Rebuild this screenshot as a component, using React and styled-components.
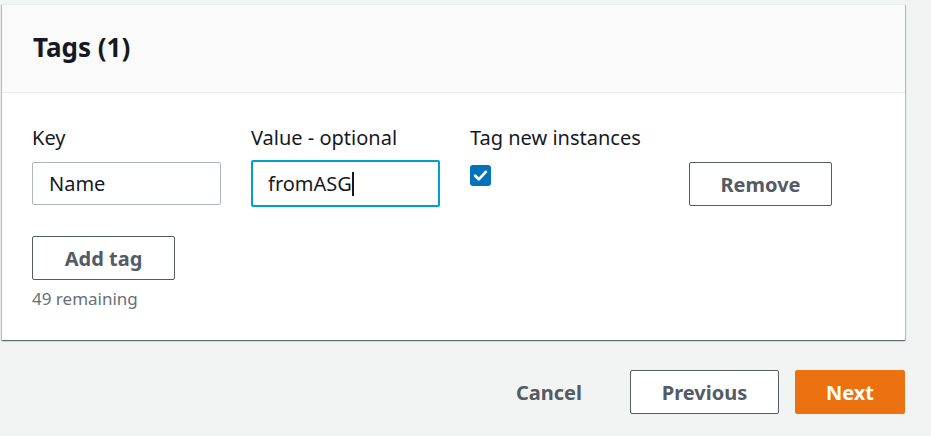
import React from "react";
import styled, { createGlobalStyle } from "styled-components";

const Global = createGlobalStyle`
  html, body { margin: 0; padding: 0; background: #f2f3f3; }
  body { font-family: "Noto Sans", "Open Sans", sans-serif; color: #16191f; }
  * { box-sizing: border-box; }
`;

const Page = styled.div`
  width: 931px;
  height: 436px;
  padding: 4px 26px 0 2px;
  background: #f2f3f3;
  overflow: hidden;
`;

const Card = styled.section`
  background: #fff;
  box-shadow: 0 1px 1px 0 rgba(0, 28, 36, 0.4), 1px 1px 1px 0 rgba(0, 28, 36, 0.2),
    -1px 1px 1px 0 rgba(0, 28, 36, 0.2);
  border-top: 1px solid #eaeded;
`;

const Header = styled.header`
  height: 88px;
  background: #fafafa;
  border-bottom: 1px solid #eaeded;
  display: flex;
  align-items: center;
  padding: 0 31px;
`;

const Title = styled.h2`
  margin: 0 0 4px;
  font-size: 26px;
  line-height: 32px;
  font-weight: 700;
  color: #16191f;
`;

const Body = styled.div`
  padding: 32px 30px 30px;
`;

const Row = styled.div`
  display: grid;
  grid-template-columns: 189px 189px 189px 143px;
  column-gap: 30px;
  align-items: start;
`;

const Field = styled.div`
  display: flex;
  flex-direction: column;
  gap: ${(p) => p.$gap || 11}px;
`;

const Label = styled.label`
  font-size: 20px;
  line-height: 26px;
  color: #16191f;
  white-space: nowrap;
`;

const Input = styled.div`
  height: ${(p) => (p.$focus ? 47 : 43)}px;
  margin-top: ${(p) => (p.$focus ? -2 : 0)}px;
  border: ${(p) => (p.$focus ? "2px solid #00a1c9" : "1px solid #aab7b8")};
  border-radius: 2px;
  padding: 0 ${(p) => (p.$focus ? 15 : 16)}px;
  display: flex;
  align-items: center;
  font-size: 20px;
  color: #16191f;
  background: #fff;
`;

const Caret = styled.span`
  display: inline-block;
  width: 2px;
  height: 24px;
  background: #16191f;
`;

const Check = styled.span`
  width: 21px;
  height: 21px;
  border-radius: 3px;
  background: #0073bb;
  display: flex;
  align-items: center;
  justify-content: center;
`;

const Button = styled.button`
  height: 44px;
  width: ${(p) => p.$w}px;
  border: 1px solid ${(p) => (p.$primary ? "#ec7211" : "#545b64")};
  border-radius: 2px;
  background: ${(p) => (p.$primary ? "#ec7211" : "#fff")};
  color: ${(p) => (p.$primary ? "#fff" : "#545b64")};
  font-family: "Noto Sans", "Open Sans", sans-serif;
  font-size: 20px;
  font-weight: 700;
  padding: 0;
  margin-top: ${(p) => p.$mt || 0}px;
`;

const LinkButton = styled.button`
  border: none;
  background: none;
  color: #545b64;
  font-family: "Noto Sans", "Open Sans", sans-serif;
  font-size: 20px;
  font-weight: 700;
  padding: 0 32px;
  height: 44px;
`;

const AddArea = styled.div`
  margin-top: 29px;
  display: flex;
  flex-direction: column;
  gap: 8px;
`;

const Hint = styled.div`
  font-size: 17px;
  line-height: 22px;
  color: #687078;
`;

const Footer = styled.div`
  display: flex;
  justify-content: flex-end;
  align-items: center;
  gap: 16px;
  margin-top: 30px;
`;

export default function App() {
  return (
    <Page>
      <Global />
      <Card>
        <Header>
          <Title>Tags (1)</Title>
        </Header>
        <Body>
          <Row>
            <Field>
              <Label>Key</Label>
              <Input>Name</Input>
            </Field>
            <Field>
              <Label>Value - optional</Label>
              <Input $focus>
                fromASG
                <Caret />
              </Input>
            </Field>
            <Field $gap={14}>
              <Label>Tag new instances</Label>
              <Check>
                <svg width="15" height="15" viewBox="0 0 14 14">
                  <path d="M2 7.2 L5.4 10.6 L12 3.6" fill="none" stroke="#fff" strokeWidth="2.6" strokeLinecap="round" strokeLinejoin="round" />
                </svg>
              </Check>
            </Field>
            <Button $w={143} $mt={37}>Remove</Button>
          </Row>
          <AddArea>
            <Button $w={143}>Add tag</Button>
            <Hint>49 remaining</Hint>
          </AddArea>
        </Body>
      </Card>
      <Footer>
        <LinkButton>Cancel</LinkButton>
        <Button $w={149}>Previous</Button>
        <Button $w={110} $primary>Next</Button>
      </Footer>
    </Page>
  );
}
